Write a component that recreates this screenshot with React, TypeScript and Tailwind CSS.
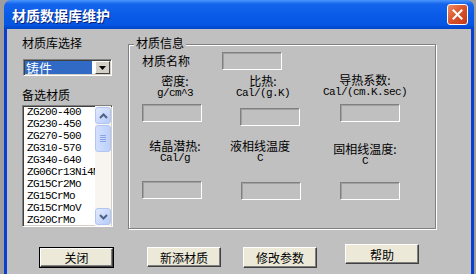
import React from "react";

const cjk = "font-['Noto_Sans_CJK_SC',sans-serif] text-[12px] leading-[13px] text-black";
const mono = "font-['Liberation_Mono','Noto_Sans_CJK_SC',monospace] text-[11px] tracking-[-0.6px] leading-[13px] text-black";

const sunken = "border border-t-[#808080] border-l-[#808080] border-b-white border-r-white shadow-[inset_1px_1px_0_#404040,inset_-1px_-1px_0_#d4d0c8]";

const materials = [
    "ZG200-400",
    "ZG230-450",
    "ZG270-500",
    "ZG310-570",
    "ZG340-640",
    "ZG06Cr13Ni4Mo",
    "ZG15Cr2Mo",
    "ZG15CrMo",
    "ZG15CrMoV",
    "ZG20CrMo",
];

const Field = ({ className = "" }: { className?: string }) => (
    <div className={`h-[18px] w-[60px] bg-[#c0c0c0] border border-t-[#808080] border-l-[#808080] border-b-white border-r-white shadow-[inset_1px_1px_0_#a0a0a0] ${className}`} />
);

const Btn = ({ text, className = "", isDefault = false }: { text: string; className?: string; isDefault?: boolean }) => (
    <div className={`${isDefault ? "border border-black" : ""} ${className}`}>
        <div className="h-full w-full flex items-center justify-center bg-[#ece9d8] border border-t-white border-l-white border-b-[#404040] border-r-[#404040] shadow-[inset_-1px_-1px_0_#808080]">
            <span className={cjk}>{text}</span>
        </div>
    </div>
);

const Chevron = ({ up }: { up: boolean }) => (
    <svg width="9" height="6" viewBox="0 0 9 6">
        <path d={up ? "M1 5 L4.5 1.5 L8 5" : "M1 1 L4.5 4.5 L8 1"} fill="none" stroke="#4d6185" strokeWidth="2" />
    </svg>
);

const ScrollBtn = ({ up }: { up: boolean }) => (
    <div className="h-[17px] w-full flex items-center justify-center rounded-[3px] border border-[#b3c6f3] bg-[linear-gradient(to_bottom_right,#e2ebfe,#b6cafa)]">
        <Chevron up={up} />
    </div>
);

const App: React.FC = () => {
    return (
        <div className="w-[476px] h-[274px] overflow-hidden bg-[#9e9e9e]">
            <div className="ml-[4px] w-[470px] h-full flex flex-col">
                {/* title bar */}
                <div className="h-[29px] shrink-0 rounded-t-[7px] flex items-center pl-[8px] pr-[6px] bg-[linear-gradient(to_bottom,#4a96fa_0%,#1464ec_14%,#0a5ce8_50%,#0556e2_85%,#0044c8_100%)]">
                    <span className="text-white font-bold text-[14px] leading-[16px] font-['Noto_Sans_CJK_SC',sans-serif] [text-shadow:1px_1px_0_#0c2377]">材质数据库维护</span>
                    <div className="ml-auto w-[21px] h-[21px] rounded-[3px] border border-white flex items-center justify-center bg-[linear-gradient(to_bottom_right,#f08a62,#d8532c_50%,#c03a18)]">
                        <svg width="11" height="11" viewBox="0 0 11 11">
                            <path d="M1.5 1.5 L9.5 9.5 M9.5 1.5 L1.5 9.5" stroke="white" strokeWidth="2" strokeLinecap="square" />
                        </svg>
                    </div>
                </div>

                {/* body */}
                <div className="flex-1 bg-[#c0c0c0] border-x-[3px] border-[#0a3fcf]">
                    <div className="flex">
                        {/* left column */}
                        <div className="ml-[15px] pt-[7px] w-[92px] flex flex-col">
                            <div className={`${cjk} leading-[14px]`}>材质库选择</div>

                            <div className={`mt-[9px] ml-[1px] w-[89px] h-[17px] bg-white flex items-stretch p-[1px] ${sunken}`}>
                                <div className="flex-1 mr-[3px] bg-[#316ac5] pl-[1px] flex items-center">
                                    <span className="font-['Noto_Sans_CJK_SC',sans-serif] text-[13px] leading-[13px] text-white">铸件</span>
                                </div>
                                <div className="w-[15px] flex items-center justify-center bg-[#d4d0c8] border border-t-white border-l-white border-b-[#404040] border-r-[#404040]">
                                    <svg width="7" height="4" viewBox="0 0 7 4">
                                        <path d="M0 0 H7 L3.5 4 Z" fill="black" />
                                    </svg>
                                </div>
                            </div>

                            <div className={`mt-[12px] ${cjk} leading-[14px]`}>备选材质</div>

                            <div className={`mt-[3px] w-[91px] h-[122px] bg-white flex ${sunken} px-[1px]`}>
                                <div className="w-[72px] overflow-hidden pl-[3px]">
                                    {materials.map((m) => (
                                        <div key={m} className="font-['Liberation_Mono',monospace] text-[11px] tracking-[-0.6px] leading-[12px] text-black whitespace-nowrap">
                                            {m}
                                        </div>
                                    ))}
                                </div>
                                <div className="w-[16px] py-[1px] flex flex-col bg-[#f6f5f0]">
                                    <ScrollBtn up={true} />
                                    <div className="h-[27px] mt-[1px] rounded-[3px] border border-[#b3c6f3] bg-[linear-gradient(to_right,#d3e0fd,#bcd0fb)] flex flex-col items-center justify-center gap-[1px]">
                                        <div className="w-[6px] h-[1px] bg-[#8aa5e6]" />
                                        <div className="w-[6px] h-[1px] bg-[#8aa5e6]" />
                                        <div className="w-[6px] h-[1px] bg-[#8aa5e6]" />
                                        <div className="w-[6px] h-[1px] bg-[#8aa5e6]" />
                                    </div>
                                    <div className="flex-1" />
                                    <ScrollBtn up={false} />
                                </div>
                            </div>
                        </div>

                        {/* group box */}
                        <div className="relative ml-[14px] mt-[15px] w-[308px] h-[185px] border border-[#808080] shadow-[inset_1px_1px_0_#fff,1px_1px_0_#fff]">
                            <div className={`absolute left-[5px] top-[-9px] px-[2px] bg-[#c0c0c0] ${cjk} leading-[14px]`}>材质信息</div>

                            <div className="mt-[7px] ml-[13px] flex items-center">
                                <div className={`${cjk} leading-[14px] w-[48px]`}>材质名称</div>
                                <Field className="ml-[32px]" />
                            </div>

                            <div className="flex">
                                <div className="ml-[13px] w-[66px] flex flex-col">
                                    <div className={`mt-[4px] text-center ${cjk}`}>密度:</div>
                                    <div className={`text-center ${mono}`}>g/cm^3</div>
                                    <Field className="mt-[4px]" />
                                    <div className={`mt-[17px] text-center ${cjk}`}>结晶潜热:</div>
                                    <div className={`text-center ${mono}`}>Cal/g</div>
                                    <Field className="mt-[16px]" />
                                </div>

                                <div className="ml-[22px] w-[70px] flex flex-col">
                                    <div className={`mt-[4px] w-[66px] text-center ${cjk}`}>比热:</div>
                                    <div className={`w-[66px] text-center ${mono}`}>Cal/(g.K)</div>
                                    <Field className="mt-[8px] ml-[10px]" />
                                    <div className={`mt-[13px] ${cjk}`}>液相线温度</div>
                                    <div className={`w-[60px] text-center ${mono}`}>C</div>
                                    <Field className="mt-[17px] ml-[11px]" />
                                </div>

                                <div className="ml-[23px] w-[84px] flex flex-col">
                                    <div className={`mt-[3px] text-center ${cjk}`}>导热系数:</div>
                                    <div className={`text-center ${mono}`}>Cal/(cm.K.sec)</div>
                                    <Field className="mt-[5px] ml-[17px]" />
                                    <div className={`mt-[20px] text-center ${cjk}`}>固相线温度:</div>
                                    <div className={`text-center ${mono}`}>C</div>
                                    <Field className="mt-[14px] ml-[17px]" />
                                </div>
                            </div>
                        </div>
                    </div>

                    {/* buttons */}
                    <div className="mt-[15px] ml-[32px] flex items-start">
                        <Btn text="关闭" isDefault={true} className="mt-[3px] w-[75px] h-[21px]" />
                        <Btn text="新添材质" className="mt-[3px] ml-[33px] w-[74px] h-[20px]" />
                        <Btn text="修改参数" className="mt-[3px] ml-[22px] w-[74px] h-[21px]" />
                        <Btn text="帮助" className="ml-[28px] w-[74px] h-[20px]" />
                    </div>
                </div>
            </div>
        </div>
    );
};

export default App;
